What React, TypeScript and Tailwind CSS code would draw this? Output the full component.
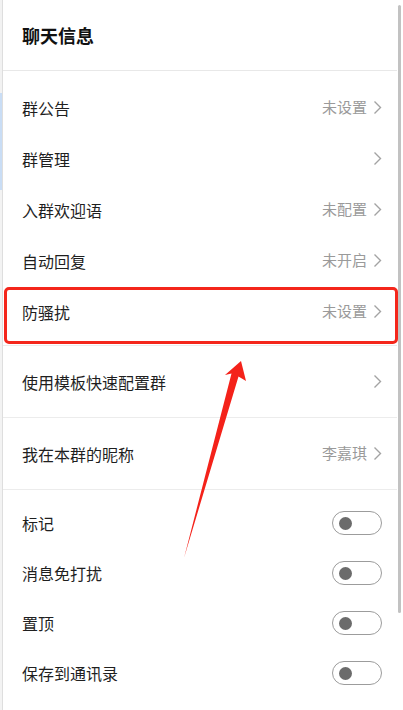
import React from "react";

const font = { fontFamily: '"Noto Sans CJK SC", "Noto Sans", sans-serif' };

function Chevron() {
  return (
    <svg width="9" height="15" viewBox="0 0 9 15" className="shrink-0">
      <polyline points="1.5,1.5 7.5,7.5 1.5,13.5" fill="none" stroke="#a3a3a3" strokeWidth="1.4" />
    </svg>
  );
}

function LinkRow({ label, value, h = "h-[51px]" }: { label: string; value?: string; h?: string }) {
  return (
    <div className={`flex items-center justify-between pl-[19px] pr-[15px] ${h}`}>
      <span className="text-[16px] text-[#1f1f1f]">{label}</span>
      <div className="flex items-center gap-[6px]">
        {value && <span className="text-[15px] text-[#9a9a9a]">{value}</span>}
        <Chevron />
      </div>
    </div>
  );
}

function ToggleRow({ label }: { label: string }) {
  return (
    <div className="flex items-center justify-between pl-[19px] pr-[15px] h-[50px]">
      <span className="text-[16px] text-[#1f1f1f]">{label}</span>
      <div className="w-[50px] h-[24px] rounded-full border border-[#9c9c9c] bg-white flex items-center pl-[6px]">
        <div className="w-[13px] h-[13px] rounded-full bg-[#6b6b6b]" />
      </div>
    </div>
  );
}

export default function App() {
  return (
    <div className="relative w-[403px] h-[710px] bg-white flex overflow-hidden" style={font}>
      <div className="w-[2px] flex flex-col">
        <div className="h-[93px] bg-[#f2f2f2]" />
        <div className="h-[97px] bg-[#c9ddf5]" />
        <div className="flex-1 bg-[#f3f3f3]" />
      </div>
      <div className="flex-1 flex flex-col border-l border-[#dedede]">
        <div className="h-[71px] flex items-center pl-[19px] border-b border-[#e8e8e8]">
          <span className="text-[18px] font-bold text-[#111]">聊天信息</span>
        </div>
        <div className="pt-[11px] pb-[8px] border-b border-[#ececec]">
          <LinkRow label="群公告" value="未设置" />
          <LinkRow label="群管理" />
          <LinkRow label="入群欢迎语" value="未配置" />
          <LinkRow label="自动回复" value="未开启" />
          <LinkRow label="防骚扰" value="未设置" />
        </div>
        <div className="border-b border-[#ececec]">
          <LinkRow label="使用模板快速配置群" h="h-[71px]" />
        </div>
        <div className="border-b border-[#ececec]">
          <LinkRow label="我在本群的昵称" value="李嘉琪" h="h-[71px]" />
        </div>
        <div className="pt-[8px]">
          <ToggleRow label="标记" />
          <ToggleRow label="消息免打扰" />
          <ToggleRow label="置顶" />
          <ToggleRow label="保存到通讯录" />
        </div>
      </div>
      <div className="w-[6px] pt-[5px] pl-[1px]">
        <div className="w-[3px] h-[608px] rounded-full bg-[#c2c2c2]" />
      </div>

      <div className="absolute left-[4px] top-[287px] w-[394px] h-[57px] border-[3px] border-[#f4261b] rounded-[5px]" />
      <svg className="absolute left-0 top-0 pointer-events-none" width="403" height="710">
        <polygon
          points="241,361 246,381 238.5,376.5 184,558 231.5,373.5 225,375"
          fill="#f4221a"
        />
      </svg>
    </div>
  );
}
